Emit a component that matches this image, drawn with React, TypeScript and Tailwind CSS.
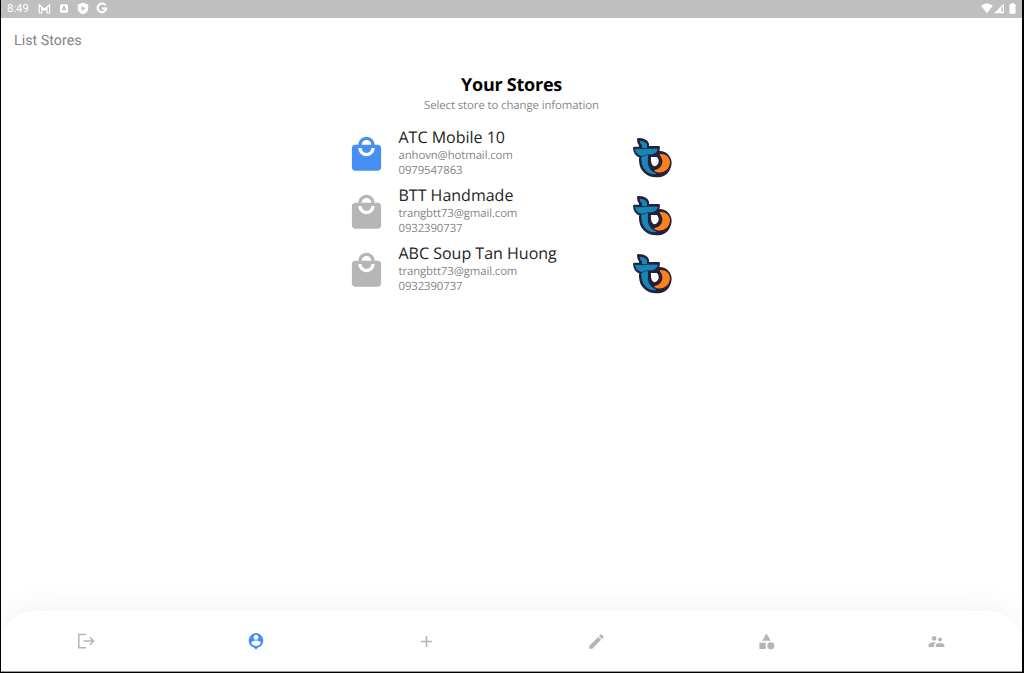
import { MdAdd, MdCategory, MdEdit, MdLocalMall, MdSupervisorAccount } from "react-icons/md";

const stores = [
  { name: "ATC Mobile 10", email: "anhovn@hotmail.com", phone: "0979547863", active: true },
  { name: "BTT Handmade", email: "trangbtt73@gmail.com", phone: "0932390737", active: false },
  { name: "ABC Soup Tan Huong", email: "trangbtt73@gmail.com", phone: "0932390737", active: false },
];

function StoreLogo() {
  return (
    <svg className="h-14 w-14" viewBox="0 0 168 168">
      <g strokeLinejoin="round" strokeLinecap="round">
        <path d="M40 28 Q63 28 68 42 V52 H101 Q101 62 96 68 C123 63 139 84 135 106 C130 127 115 138 94 138 C67 138 47 120 46 92 V80 Q29 74 28 54 H46 V46 Q40 40 40 28Z" fill="#26213b" stroke="#26213b" strokeWidth="8" />
        <path d="M44 32 Q64 33 66 45 V54 H51 V46 Q45 42 44 32Z" fill="#1787b8" />
        <path d="M51 82 L67 76 V94 C67 113 77 125 92 131 C70 134 52 117 51 93Z" fill="#1787b8" stroke="#1787b8" strokeWidth="3" />
        <path d="M31 58 H52 L66 57 H98 Q95 69 82 72 H68 L50 77 Q33 73 31 58Z" fill="#1787b8" stroke="#1787b8" strokeWidth="2" />
        <path d="M106 74 C125 73 136 88 132 104 C127 124 104 130 90 122 C113 117 122 94 106 74Z" fill="#fb821c" stroke="#fb821c" strokeWidth="4" />
        <path d="M78 81 H95 C105 89 103 105 88 109 C79 104 77 97 78 81Z" fill="#fff" />
      </g>
    </svg>
  );
}

function StatusBar() {
  return (
    <header className="flex h-[18px] shrink-0 items-center bg-[#bfbfbf] pr-[5px] pl-[6px] text-[11.3px] leading-[18px] text-white">
      <span className="w-[30px]">8:49</span>
      <svg className="h-[18px] w-[76px]" viewBox="37 0 76 18">
        <path d="M39.2 13V4.8l5.2 4.3 5.2-4.3V13H47V8.2l-2.6 2.2-2.6-2.2V13Z" fill="none" stroke="#fff" strokeWidth="1.2" />
        <rect x="60" y="4.3" width="8" height="8.4" rx=".8" fill="#fff" />
        <path d="m62.2 10.6 1.8-4.3 1.8 4.3M63 9.2h2" fill="none" stroke="#aaa" strokeWidth=".9" />
        <path d="m83 2.7 5.2 1.8v4.2q0 3.7-5.2 5.7-5.2-2-5.2-5.7V4.5Z" fill="#fff" />
        <path d="m81.5 6 4 2.4-4 2.4Z" fill="#bfbfbf" />
        <path d="M105.5 5.2A4.4 4.4 0 1 0 106.3 8.6H102" fill="none" stroke="#fff" strokeWidth="2" />
      </svg>
      <svg className="ml-auto h-[18px] w-[38px]" viewBox="979 0 38 18">
        <path d="M981 5.8q5.9-5 11.8 0L987 13.2Z" fill="#fff" />
        <path d="M1004 3.5v9.7h-10Z" fill="#fff" />
        <path d="M1001.4 7.3h1.5v4.8h-1.5Z" fill="#bfbfbf" />
        <path d="M1009.5 4.1h1.7V3h2.6v1.1h1.7v9.6h-6Z" fill="#fff" />
      </svg>
    </header>
  );
}

export default function App() {
  return (
    <div className="flex h-[673px] w-[1024px] flex-col overflow-hidden border-r-2 border-b border-l border-black bg-white font-['Roboto',sans-serif] [text-rendering:geometricPrecision]">
      <StatusBar />
      <h1 className="mt-[13px] ml-[13px] h-[20px] text-[14.3px] leading-[20px] text-[#858585]">List Stores</h1>
      <main className="flex flex-1 flex-col items-center pt-[22px] font-['Open_Sans',sans-serif]">
        <h2 className="h-[25px] text-[18px] leading-[24px] font-bold tracking-[-0.25px] text-black">Your Stores</h2>
        <p className="h-[16px] text-[11.4px] leading-[16px] tracking-[-0.1px] text-[#888]">Select store to change infomation</p>
        <ul className="mt-[13px] w-[330px]">
          {stores.map((s) => (
            <li key={s.name} className="flex h-[58.2px]">
              <MdLocalMall size={39} className={s.active ? "mt-[8px] shrink-0 text-[#488ff4]" : "mt-[8px] shrink-0 text-[#b6b6b6]"} />
              <div className="ml-[13px] flex flex-1 flex-col text-[11.4px] tracking-[-0.12px] text-[#858585]">
                <span className="h-[21px] text-[16px] leading-[20px] tracking-normal text-[#242424]">{s.name}</span>
                <span className="h-[15px] leading-[15px]">{s.email}</span>
                <span className="h-[15px] leading-[15px]">{s.phone}</span>
              </div>
              <div className="mt-[3px] -mr-[4px]"><StoreLogo /></div>
            </li>
          ))}
        </ul>
      </main>
      <nav className="grid h-[61px] shrink-0 grid-cols-6 place-items-center rounded-t-[34px] border-b border-[#999] bg-white text-[#b5b5b5] shadow-[0_-4px_30px_rgba(0,0,0,0.05)]">
        <svg className="h-5 w-5" viewBox="0 0 20 20" fill="none" stroke="currentColor" strokeWidth="1.5">
          <path d="M10 3.5H2.8v13.2H10M7.5 10.1h10M14 6.5l3.6 3.6-3.6 3.6" />
        </svg>
        <svg className="h-5 w-5" viewBox="0 0 20 20">
          <path d="M10 2a7.5 7.5 0 0 0-2.2 14.6L10 18.4l2.2-1.8A7.5 7.5 0 0 0 10 2Z" fill="#488ff4" />
          <circle cx="10" cy="6.4" r="2.4" fill="#fff" />
          <path d="M5.3 12.3c0-3.7 9.4-3.7 9.4 0-1.9 3.4-7.5 3.4-9.4 0Z" fill="#fff" />
        </svg>
        <MdAdd size={19} />
        <MdEdit size={19} />
        <MdCategory size={19} />
        <MdSupervisorAccount size={19} />
      </nav>
    </div>
  );
}
